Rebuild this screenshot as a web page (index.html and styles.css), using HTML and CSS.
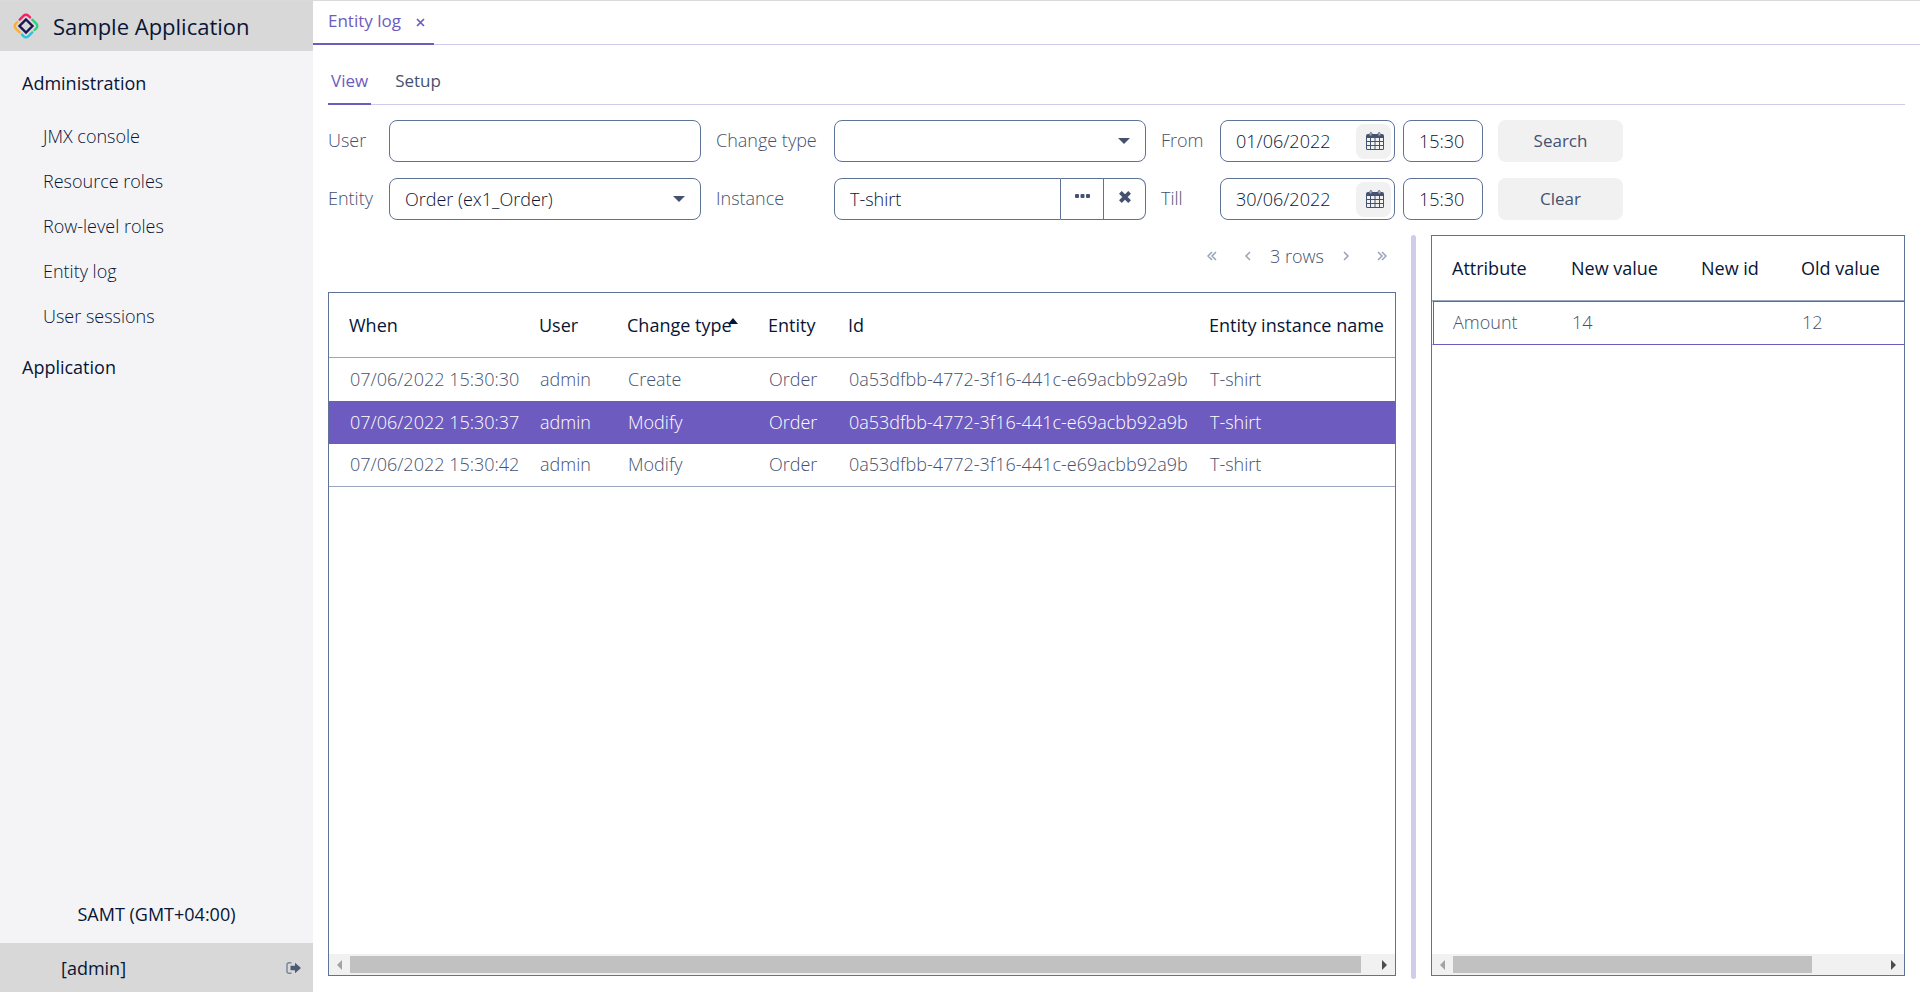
FILE: index.html
```html
<!DOCTYPE html>
<html lang="en">
<head>
<meta charset="utf-8">
<title>Sample Application</title>
<link rel="stylesheet" href="styles.css">
</head>
<body>
<svg class="sprite" aria-hidden="true">
  <symbol id="calendar" viewBox="0 0 18 18"><path fill="currentColor" fill-rule="evenodd" d="M2 2h1.500v1.500h2.500V2h6v1.500h2.500V2H16a2 2 0 0 1 2 2v12.500a1.500 1.500 0 0 1-1.500 1.500h-15A1.500 1.500 0 0 1 0 16.500V4a2 2 0 0 1 2-2zM1 6v3h3V6zm4 0v3h3.500V6zm4.500 0v3H13V6zM14 6v3h3V6zM1 10v3h3v-3zm4 0v3h3.500v-3zm4.500 0v3H13v-3zm4.500 0v3h3v-3zM1 14v2.500a.5.5 0 0 0 .5.5H4v-3zm4 0v3h3.500v-3zm4.500 0v3H13v-3zm4.500 0v3h2.500a.5.5 0 0 0 .5-.5V14z"/><path fill="#fff" stroke="currentColor" d="M4 1.500a.9.9 0 0 1 1.800 0V4H4zM12.200 1.500a.9.9 0 0 1 1.800 0V4h-1.800z"/></symbol>
  <symbol id="caret" viewBox="0 0 12 6"><path fill="currentColor" d="M0 0h12L6 6z"/></symbol>
</svg>
<div class="app">
  <aside class="sidebar">
    <header class="brand">
      <svg class="logo" viewBox="0 0 26 26" fill="none" stroke-width="2.400" stroke-linecap="round" stroke-linejoin="round">
        <path stroke="#1c1650" stroke-linejoin="miter" d="M13 6.500l6.500 6.500-6.500 6.500L6.500 13z"/>
        <path stroke="#f91f62" d="M6.700 6.700l4-4a3.200 3.200 0 0 1 4.600 0L17 4.400"/>
        <path stroke="#2dd182" d="M19.300 6.700l4 4a3.200 3.200 0 0 1 0 4.600L21.600 17"/>
        <path stroke="#2bc4de" d="M19.300 19.300l-4 4a3.200 3.200 0 0 1-4.600 0L9 21.600"/>
        <path stroke="#fbb034" d="M6.700 19.300l-4-4a3.200 3.200 0 0 1 0-4.600L4.400 9"/>
      </svg>
      <span>Sample Application</span>
    </header>
    <nav class="menu">
      <a class="group" href="#">Administration</a>
      <a class="item" href="#">JMX console</a>
      <a class="item" href="#">Resource roles</a>
      <a class="item" href="#">Row-level roles</a>
      <a class="item" href="#">Entity log</a>
      <a class="item" href="#">User sessions</a>
      <a class="group" href="#">Application</a>
    </nav>
    <div class="zone">SAMT (GMT+04:00)</div>
    <footer class="account">
      <span>[admin]</span>
      <button class="logout" aria-label="Log out"><svg viewBox="0 0 15 12"><path fill="none" stroke="#7b879d" stroke-width="1.500" d="M5.500.8H3A2 2 0 0 0 1 2.800v6.400a2 2 0 0 0 2 2h2.500"/><path fill="#4d5b78" d="M4.500 3.800H9V.8L15 6 9 11.200v-3H4.500z"/></svg></button>
    </footer>
  </aside>
  <main class="main">
    <div class="tabs">
      <div class="tab"><span>Entity log</span><button class="close" aria-label="Close tab"><svg viewBox="0 0 9 9"><path stroke="currentColor" stroke-width="1.700" d="M1 1l7 7M8 1L1 8"/></svg></button></div>
    </div>
    <div class="content">
      <div class="subtabs"><button class="subtab active">View</button><button class="subtab">Setup</button></div>
      <form class="filter">
        <label for="user">User</label>
        <input id="user" type="text">
        <label for="type">Change type</label>
        <div class="combo"><select id="type"><option></option></select><svg class="caret"><use href="#caret"/></svg></div>
        <label for="from">From</label>
        <div class="moment">
          <div class="date"><input id="from" type="text" value="01/06/2022"><button type="button" aria-label="Pick start date"><svg><use href="#calendar"/></svg></button></div>
          <input type="text" value="15:30" aria-label="Start time">
        </div>
        <button class="action" type="button">Search</button>
        <label for="entity">Entity</label>
        <div class="combo"><select id="entity"><option>Order (ex1_Order)</option></select><svg class="caret"><use href="#caret"/></svg></div>
        <label for="instance">Instance</label>
        <div class="picker">
          <input id="instance" type="text" value="T-shirt">
          <button type="button" aria-label="Select instance"><svg class="dots" viewBox="0 0 15 4"><path fill="currentColor" d="M1 0h2a1 1 0 0 1 1 1v2a1 1 0 0 1-1 1H1a1 1 0 0 1-1-1V1a1 1 0 0 1 1-1zM6.500 0h2a1 1 0 0 1 1 1v2a1 1 0 0 1-1 1h-2a1 1 0 0 1-1-1V1a1 1 0 0 1 1-1zM12 0h2a1 1 0 0 1 1 1v2a1 1 0 0 1-1 1h-2a1 1 0 0 1-1-1V1a1 1 0 0 1 1-1z"/></svg></button>
          <button type="button" aria-label="Clear instance"><svg class="cross" viewBox="0 0 12 12"><path stroke="currentColor" stroke-width="3.800" d="M1.400 1.400l9.200 9.200M10.600 1.400l-9.200 9.200"/></svg></button>
        </div>
        <label for="till">Till</label>
        <div class="moment">
          <div class="date"><input id="till" type="text" value="30/06/2022"><button type="button" aria-label="Pick end date"><svg><use href="#calendar"/></svg></button></div>
          <input type="text" value="15:30" aria-label="End time">
        </div>
        <button class="action" type="button">Clear</button>
      </form>
      <div class="split">
        <section class="log">
          <div class="pager">
            <button aria-label="First page"><svg viewBox="0 0 10 10"><path d="M5 1L1 5l4 4M9 1L5 5l4 4"/></svg></button>
            <button aria-label="Previous page"><svg viewBox="0 0 10 10"><path d="M7 1L3 5l4 4"/></svg></button>
            <span>3 rows</span>
            <button aria-label="Next page"><svg viewBox="0 0 10 10"><path d="M3 1l4 4-4 4"/></svg></button>
            <button aria-label="Last page"><svg viewBox="0 0 10 10"><path d="M1 1l4 4-4 4M5 1l4 4-4 4"/></svg></button>
          </div>
          <div class="panel">
            <table class="entries">
              <colgroup><col class="c-when"><col class="c-user"><col class="c-type"><col class="c-entity"><col class="c-id"><col></colgroup>
              <thead><tr><th>When</th><th>User</th><th><span class="sorted">Change type<svg class="sort" viewBox="0 0 10 6"><path fill="currentColor" d="M0 6l5-6 5 6z"/></svg></span></th><th>Entity</th><th>Id</th><th>Entity instance name</th></tr></thead>
              <tbody>
                <tr><td>07/06/2022 15:30:30</td><td>admin</td><td>Create</td><td>Order</td><td>0a53dfbb-4772-3f16-441c-e69acbb92a9b</td><td>T-shirt</td></tr>
                <tr class="selected"><td>07/06/2022 15:30:37</td><td>admin</td><td>Modify</td><td>Order</td><td>0a53dfbb-4772-3f16-441c-e69acbb92a9b</td><td>T-shirt</td></tr>
                <tr><td>07/06/2022 15:30:42</td><td>admin</td><td>Modify</td><td>Order</td><td>0a53dfbb-4772-3f16-441c-e69acbb92a9b</td><td>T-shirt</td></tr>
              </tbody>
            </table>
            <div class="scroll"><svg class="arrow off" viewBox="0 0 5 10"><path fill="currentColor" d="M5 0v10L0 5z"/></svg><div class="track"><div class="thumb" style="width:98.7%"></div></div><svg class="arrow" viewBox="0 0 5 10"><path fill="currentColor" d="M0 0v10l5-5z"/></svg></div>
          </div>
        </section>
        <div class="splitter"></div>
        <section class="panel attributes">
          <table>
            <colgroup><col class="c-attr"><col class="c-new"><col class="c-newid"><col></colgroup>
            <thead><tr><th>Attribute</th><th>New value</th><th>New id</th><th>Old value</th></tr></thead>
            <tbody><tr class="focused"><td>Amount</td><td>14</td><td></td><td>12</td></tr></tbody>
          </table>
          <div class="scroll"><svg class="arrow off" viewBox="0 0 5 10"><path fill="currentColor" d="M5 0v10L0 5z"/></svg><div class="track"><div class="thumb" style="width:83.5%"></div></div><svg class="arrow" viewBox="0 0 5 10"><path fill="currentColor" d="M0 0v10l5-5z"/></svg></div>
        </section>
      </div>
    </div>
  </main>
</div>
</body>
</html>
```
FILE: styles.css
```css
:root {
  --ink: #081536;
  --muted: #44526f;
  --line: #5f7399;
  --primary: #6e5bc0;
  --pale: #d1cbec;
  --soft: #f1f1f1;
}
* { box-sizing: border-box; }
body {
  margin: 0;
  font: 300 18px/24px "Open Sans", "Noto Sans", sans-serif;
  color: var(--muted);
  background: #fff;
}
button, input, select { font: inherit; color: inherit; margin: 0; }
button { display: flex; align-items: center; justify-content: center; padding: 0; border: 0; background: none; }
svg { display: block; flex: none; }
a { color: inherit; text-decoration: none; }
.sprite { display: none; }
.app { display: flex; min-height: 100vh; border-top: 1px solid #dadada; }

.sidebar { display: flex; flex-direction: column; flex: none; width: 313px; background: #f4f4f7; color: var(--ink); }
.brand { display: flex; align-items: center; gap: 14px; height: 50px; padding: 0 0 1px 13px; background: #d8d8d8; font-size: 22px; font-weight: 500; }
.logo { width: 26px; height: 26px; }
.menu { display: flex; flex-direction: column; flex: 1; padding-top: 3px; }
.group { padding: 17px 22px 18px; font-weight: 500; }
.item { padding: 11px 43px 10px; }
.zone { padding: 15px 0 17px; text-align: center; font-weight: 400; }
.account { display: flex; align-items: center; justify-content: space-between; height: 49px; padding: 0 12px 0 61px; background: #d8d8d8; font-weight: 400; }
.logout svg { width: 15px; height: 12px; }

.main { display: flex; flex-direction: column; flex: 1; min-width: 0; }
.tabs { display: flex; height: 44px; border-bottom: 1px solid var(--pale); }
.tab { display: flex; align-items: center; gap: 15px; height: 44px; padding: 0 9px 2px 15px; border-bottom: 2px solid var(--primary); color: var(--primary); font-size: 17px; font-weight: 400; }
.close { padding-top: 3px; }
.close svg { width: 9px; height: 9px; }
.content { display: flex; flex-direction: column; flex: 1; padding: 15px 15px 13px; }
.subtabs { display: flex; gap: 21px; height: 45px; border-bottom: 1px solid var(--pale); }
.subtab { height: 45px; padding: 0 3px 2px; border-bottom: 2px solid transparent; font-size: 17px; font-weight: 400; }
.active { border-color: var(--primary); color: var(--primary); }

.filter { display: grid; grid-template-columns: 46px 312px 103px 312px 44px 263px 125px; gap: 16px 15px; align-items: center; padding: 15px 0; }
.filter input, select { width: 100%; height: 42px; padding: 0 15px; border: 1px solid var(--line); border-radius: 8px; background: #fff; color: var(--ink); }
.filter label { padding-bottom: 2px; white-space: nowrap; }
.combo { position: relative; }
select { appearance: none; }
.caret { position: absolute; top: 18px; right: 16px; width: 12px; height: 6px; pointer-events: none; }
.picker { display: flex; }
.filter .picker input { flex: 1; min-width: 0; border-radius: 8px 0 0 8px; }
.picker button { width: 43px; height: 42px; border: 1px solid var(--line); border-left: 0; padding-bottom: 6px; }
.picker button:last-child { width: 42px; padding-bottom: 4px; border-radius: 0 8px 8px 0; }
.dots { width: 15px; height: 4px; }
.cross { width: 12px; height: 12px; }
.moment { display: grid; grid-template-columns: 175px 80px; gap: 8px; }
.date { position: relative; }
.date button { position: absolute; top: 4px; right: 4px; width: 35px; height: 35px; padding: 0 0 1px 3px; border-radius: 8px; background: var(--soft); }
.date svg { width: 18px; height: 18px; }
.action { height: 42px; border-radius: 8px; background: var(--soft); font-size: 17px; font-weight: 500; }

.split { display: flex; flex: 1; gap: 15px; }
.log { display: flex; flex-direction: column; flex: 1; min-width: 0; }
.pager { display: flex; align-items: center; justify-content: flex-end; height: 42px; margin-bottom: 15px; padding-right: 9px; color: var(--muted); }
.pager button { width: 10px; height: 24px; margin-right: 26px; }
.pager button:last-child { margin: 0; }
.pager span + button { margin-left: 17px; }
.pager button:nth-child(2) { margin-right: 17px; }
.pager svg { width: 10px; height: 10px; fill: none; stroke: #98a3ba; stroke-width: 1.500; }
.panel { display: flex; flex-direction: column; justify-content: space-between; flex: 1; margin-bottom: 3px; border: 1px solid var(--line); overflow: hidden; }
.attributes { flex: none; width: 474px; }
.splitter { width: 5px; border-radius: 3px; background: var(--pale); }
table { width: 100%; table-layout: fixed; border-collapse: separate; border-spacing: 0; }
th, td { padding: 0 0 0 20px; text-align: left; white-space: nowrap; }
th { height: 65px; border-bottom: 1px solid #9aa6bd; color: var(--ink); font-weight: 500; }
td { height: 43px; padding: 0 0 2px 21px; }
.entries tr:last-child td { border-bottom: 1px solid #9aa6bd; }
.selected { background: var(--primary); color: #fff; }
.focused td { height: 44px; padding-bottom: 3px; border: solid var(--primary); border-width: 1px 0; }
.focused td:first-child { padding-left: 20px; border-left: 1px solid #fff; box-shadow: inset 1px 0 var(--primary); }
.c-when { width: 190px; }
.c-user { width: 88px; }
.c-type { width: 141px; }
.c-entity { width: 80px; }
.c-id { width: 361px; }
.c-attr { width: 119px; }
.c-new { width: 130px; }
.c-newid { width: 100px; }
.sorted { position: relative; }
.sort { position: absolute; top: 5px; right: -6px; width: 10px; height: 6px; }
.scroll { display: flex; align-items: center; height: 21px; background: #f1f1f1; color: #4c4c4c; }
.arrow { width: 5px; height: 10px; margin: 0 8px; }
.off { color: #a3a3a3; }
.track { flex: 1; }
.thumb { height: 17px; background: #c1c1c1; }
```
